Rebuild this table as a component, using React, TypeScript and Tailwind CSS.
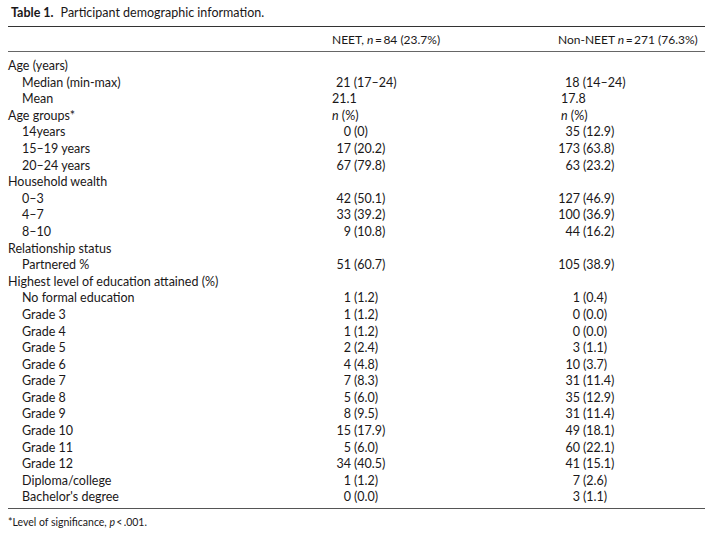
import React from "react";

type Row = {
  label: string;
  indent?: boolean;
  a?: [string, string] | string;
  b?: [string, string] | string;
  italicN?: boolean;
  shift?: boolean;
};

const rows: Row[] = [
  { label: "Age (years)" },
  { label: "Median (min-max)", indent: true, a: "21 (17–24)", b: "18 (14–24)", shift: true },
  { label: "Mean", indent: true, a: "21.1", b: "17.8" },
  { label: "Age groups*", italicN: true },
  { label: "14years", indent: true, a: ["0", "(0)"], b: ["35", "(12.9)"] },
  { label: "15–19 years", indent: true, a: ["17", "(20.2)"], b: ["173", "(63.8)"] },
  { label: "20–24 years", indent: true, a: ["67", "(79.8)"], b: ["63", "(23.2)"] },
  { label: "Household wealth" },
  { label: "0–3", indent: true, a: ["42", "(50.1)"], b: ["127", "(46.9)"] },
  { label: "4–7", indent: true, a: ["33", "(39.2)"], b: ["100", "(36.9)"] },
  { label: "8–10", indent: true, a: ["9", "(10.8)"], b: ["44", "(16.2)"] },
  { label: "Relationship status" },
  { label: "Partnered %", indent: true, a: ["51", "(60.7)"], b: ["105", "(38.9)"] },
  { label: "Highest level of education attained (%)" },
  { label: "No formal education", indent: true, a: ["1", "(1.2)"], b: ["1", "(0.4)"] },
  { label: "Grade 3", indent: true, a: ["1", "(1.2)"], b: ["0", "(0.0)"] },
  { label: "Grade 4", indent: true, a: ["1", "(1.2)"], b: ["0", "(0.0)"] },
  { label: "Grade 5", indent: true, a: ["2", "(2.4)"], b: ["3", "(1.1)"] },
  { label: "Grade 6", indent: true, a: ["4", "(4.8)"], b: ["10", "(3.7)"] },
  { label: "Grade 7", indent: true, a: ["7", "(8.3)"], b: ["31", "(11.4)"] },
  { label: "Grade 8", indent: true, a: ["5", "(6.0)"], b: ["35", "(12.9)"] },
  { label: "Grade 9", indent: true, a: ["8", "(9.5)"], b: ["31", "(11.4)"] },
  { label: "Grade 10", indent: true, a: ["15", "(17.9)"], b: ["49", "(18.1)"] },
  { label: "Grade 11", indent: true, a: ["5", "(6.0)"], b: ["60", "(22.1)"] },
  { label: "Grade 12", indent: true, a: ["34", "(40.5)"], b: ["41", "(15.1)"] },
  { label: "Diploma/college", indent: true, a: ["1", "(1.2)"], b: ["7", "(2.6)"] },
  { label: "Bachelor's degree", indent: true, a: ["0", "(0.0)"], b: ["3", "(1.1)"] },
];

const Cell = ({ v, shift }: { v?: [string, string] | string; shift?: boolean }) => {
  if (!v) return <div />;
  if (typeof v === "string") {
    return <div className={shift ? "pl-[4px]" : ""}>{v}</div>;
  }
  return (
    <div className="flex">
      <span className="-ml-[6px] w-[25px] text-right">{v[0]}</span>
      <span className="ml-[3px]">{v[1]}</span>
    </div>
  );
};

export default function App() {
  return (
    <div className="min-h-[538px] w-[714px] bg-white font-['Lato','Open_Sans',sans-serif] text-[12px] text-[#1a1718]">
      <div className="pl-[11px] pt-[5px] pb-[5px] text-[12.5px] leading-[16px]">
        <span className="font-bold">Table 1.</span>
        <span className="ml-[7px]">Participant demographic information.</span>
      </div>
      <div className="ml-[8px] w-[697px] border-t border-[#333]">
        <div className="grid h-[25px] grid-cols-[324px_229px_1fr] items-center border-b border-[#666] pt-[1px]">
          <div />
          <div>
            NEET, <i>n</i>&#8201;=&#8201;84 (23.7%)
          </div>
          <div className="-ml-[3px]">
            Non-NEET <i>n</i>&#8201;=&#8201;271 (76.3%)
          </div>
        </div>
        <div className="pt-[6px] pb-[2px] text-[12.5px] leading-[16.6px]">
          {rows.map((r, i) => (
            <div key={i} className="grid grid-cols-[324px_229px_1fr]">
              <div className={r.indent ? "pl-[14px]" : ""}>{r.label}</div>
              {r.italicN ? (
                <>
                  <div>
                    <i>n</i> (%)
                  </div>
                  <div>
                    <i>n</i> (%)
                  </div>
                </>
              ) : (
                <>
                  <Cell v={r.a} shift={r.shift} />
                  <Cell v={r.b} shift={r.shift} />
                </>
              )}
            </div>
          ))}
        </div>
        <div className="border-t border-[#555] pt-[6px] text-[10.5px] leading-[14px]">
          *Level of significance, <i>p</i>&#8201;&lt;&#8201;.001.
        </div>
      </div>
    </div>
  );
}
